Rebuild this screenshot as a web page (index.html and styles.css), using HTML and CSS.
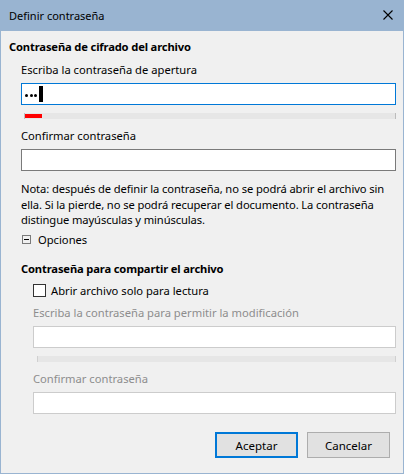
FILE: index.html
```html
<!DOCTYPE html>
<html lang="es">
<head>
<meta charset="utf-8">
<title>Definir contraseña</title>
<link rel="stylesheet" href="styles.css">
</head>
<body>
<div class="window">
  <div class="titlebar">
    <span class="title">Definir contraseña</span>
    <svg class="close" width="10" height="10" viewBox="0 0 10 10"><path d="M0.5 0.5 L9.5 9.5 M9.5 0.5 L0.5 9.5" stroke="#000" stroke-width="1.1" fill="none"/></svg>
  </div>
  <div class="content">
    <div class="heading">Contraseña de cifrado del archivo</div>
    <div class="group">
      <div class="label l1">Escriba la contraseña de apertura</div>
      <div class="input focused"><span class="dots"><span class="dot"></span><span class="dot"></span><span class="dot"></span></span><span class="caret"></span></div>
      <div class="bar"><span class="fill"></span></div>
      <div class="label l2">Confirmar contraseña</div>
      <div class="input"></div>
      <p class="note">Nota: después de definir la contraseña, no se podrá abrir el archivo sin ella. Si la pierde, no se podrá recuperar el documento. La contraseña distingue mayúsculas y minúsculas.</p>
    </div>
    <div class="options"><span class="expander"><span class="minus"></span></span>Opciones</div>
    <div class="group">
      <div class="heading h2">Contraseña para compartir el archivo</div>
      <div class="sub">
        <div class="check-row"><span class="checkbox"></span>Abrir archivo solo para lectura</div>
        <div class="label disabled l3">Escriba la contraseña para permitir la modificación</div>
        <div class="input off"></div>
        <div class="bar bar2"></div>
        <div class="label disabled l2">Confirmar contraseña</div>
        <div class="input off"></div>
      </div>
    </div>
    <div class="buttons">
      <button class="btn default">Aceptar</button>
      <button class="btn">Cancelar</button>
    </div>
  </div>
</div>
</body>
</html>
```
FILE: styles.css
```css
html, body {
  margin: 0;
  padding: 0;
  background: #f0f0f0;
}
.window {
  width: 404px;
  height: 474px;
  box-sizing: border-box;
  border: 1px solid #99b4d1;
  border-top: none;
  background: #f0f0f0;
  font-family: "Noto Sans", "DejaVu Sans", sans-serif;
  font-size: 11.2px;
  color: #000;
  display: flex;
  flex-direction: column;
}
.titlebar {
  height: 31px;
  background: #99b4d1;
  margin: 0 -1px;
  padding: 0 11px 0 9px;
  display: flex;
  align-items: center;
  justify-content: space-between;
  flex-shrink: 0;
}
.title {
  font-size: 11px;
  line-height: 15px;
  margin-top: -1px;
}
.close {
  display: block;
  margin-top: -1px;
}
.content {
  padding: 8px 7px 0 8px;
  flex: 1;
  display: flex;
  flex-direction: column;
}
.heading {
  font-weight: bold;
  line-height: 15px;
  letter-spacing: -0.15px;
}
.group {
  padding-left: 12px;
}
.label {
  line-height: 15px;
}
.l1 { margin-top: 8px; }
.l2 { margin-top: 9px; }
.input {
  margin-top: 6px;
  height: 22px;
  box-sizing: border-box;
  border: 1px solid #7a7a7a;
  background: #fff;
  display: flex;
  align-items: center;
  padding-left: 3px;
}
.input.focused {
  border-color: #0078d7;
}
.input.off {
  border-color: #cccccc;
}
.dots {
  display: flex;
  gap: 1.5px;
  margin-top: 2px;
}
.dot {
  width: 3px;
  height: 3px;
  border-radius: 50%;
  background: #000;
}
.caret {
  width: 4px;
  height: 16px;
  background: #000;
  margin-left: 2px;
}
.bar {
  margin: 8px 0 0 3px;
  height: 6px;
  background: #e6e6e6;
  border-left: 1px solid #bcbcbc;
  border-right: 1px solid #bcbcbc;
  display: flex;
  align-items: center;
}
.bar2 {
  margin-left: 4px;
  border-color: #d0d0d0;
}
.fill {
  width: 17px;
  height: 4px;
  background: #ff0000;
}
.note {
  margin: 10px 0 0;
  line-height: 15.5px;
  letter-spacing: -0.1px;
}
.options {
  margin-top: 4px;
  margin-left: 13px;
  line-height: 15px;
  display: flex;
  align-items: center;
}
.expander {
  width: 7px;
  height: 7px;
  border: 1px solid #7a7a7a;
  margin-right: 7px;
  display: flex;
  align-items: center;
  justify-content: center;
}
.minus {
  width: 5px;
  height: 1px;
  background: #000;
}
.h2 {
  margin-top: 14px;
}
.sub {
  padding-left: 12px;
}
.check-row {
  margin-top: 7px;
  line-height: 15px;
  display: flex;
  align-items: center;
}
.checkbox {
  width: 11px;
  height: 11px;
  border: 1px solid #333;
  background: #fff;
  margin-right: 5px;
}
.disabled {
  color: #8d8d8d;
}
.l3 { margin-top: 7px; }
.buttons {
  margin-top: auto;
  margin-bottom: 15px;
  display: flex;
  justify-content: flex-end;
  gap: 9px;
  padding-right: 6px;
}
.btn {
  width: 83px;
  height: 26px;
  box-sizing: border-box;
  border: 1px solid #adadad;
  background: #e1e1e1;
  font-family: inherit;
  font-size: 11.5px;
  color: #000;
  padding: 0;
  margin: 0;
}
.btn.default {
  border: 2px solid #0078d7;
}
```
